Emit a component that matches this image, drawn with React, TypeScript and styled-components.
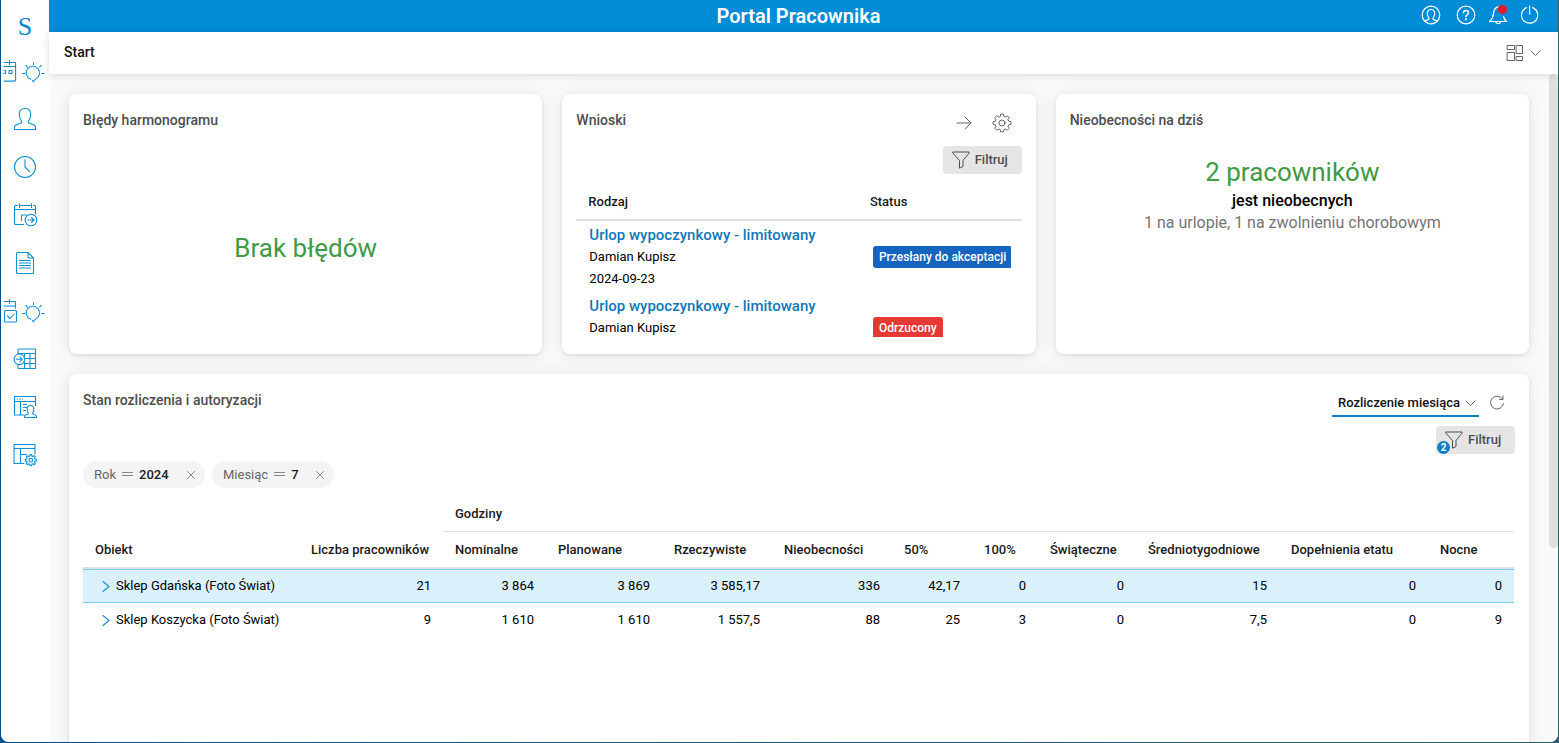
import React from "react";
import styled, { createGlobalStyle, css } from "styled-components";

const GlobalStyle = createGlobalStyle`
  *, *::before, *::after { box-sizing: border-box; }
  body {
    margin: 0;
    font-family: Roboto, "Liberation Sans", sans-serif;
    font-size: 13px;
    line-height: 22px;
    color: #1a1a1a;
  }
  button, select { font: inherit; }
`;

/* ---------- shell ---------- */

const Frame = styled.div`
  height: 100vh;
  padding: 0 1px 1px;
  background: linear-gradient(90deg, #0b4f8a, #2d5d6c);
  overflow: hidden;
`;

const Shell = styled.div`
  height: 100%;
  display: grid;
  grid-template-columns: 48px minmax(0, 1fr);
  background: #fff;
  border-radius: 0 0 8px 8px;
  overflow: hidden;
`;

const Sidebar = styled.nav`
  display: flex;
  flex-direction: column;
  background: #fff;
`;

const Logo = styled.a`
  height: 47px;
  padding-top: 6px;
  display: flex;
  align-items: center;
  justify-content: center;
  font-family: "Liberation Serif", serif;
  font-size: 26px;
  color: #0288d1;
  text-decoration: none;
`;

const NavLink = styled.a`
  height: 48px;
  display: flex;
  align-items: center;
  justify-content: center;
  color: #118fd4;
`;

const Column = styled.div`
  display: flex;
  flex-direction: column;
  min-width: 0;
  min-height: 0;
`;

const TopBar = styled.header`
  flex: none;
  height: 32px;
  display: grid;
  grid-template-columns: 1fr auto 1fr;
  align-items: center;
  padding: 0 18px 0 8px;
  background: #008cd6;
  color: #fff;
`;

const AppTitle = styled.h1`
  margin: 0;
  grid-column: 2;
  font-size: 20px;
  line-height: 28px;
  font-weight: 600;
`;

const TopActions = styled.div`
  display: flex;
  justify-content: flex-end;
  gap: 12px;
  padding-bottom: 2px;
`;

const iconButton = css`
  display: inline-flex;
  align-items: center;
  justify-content: center;
  padding: 0;
  border: 0;
  background: none;
  color: inherit;
  cursor: pointer;
`;

const IconButton = styled.button`
  ${iconButton}
`;

const SubBar = styled.div`
  flex: none;
  height: 42px;
  display: flex;
  align-items: center;
  justify-content: space-between;
  padding: 0 17px 0 15px;
  background: #fff;
  box-shadow: 0 1px 8px rgba(0, 0, 0, 0.14);
  z-index: 1;
`;

const PageTitle = styled.h2`
  margin: 0;
  padding-bottom: 2px;
  font-size: 14px;
  line-height: 22px;
  font-weight: 500;
  color: #111;
`;

const LayoutButton = styled.button`
  ${iconButton}
  gap: 6px;
  color: #666;
`;

const Body = styled.div`
  flex: 1;
  min-height: 0;
  display: flex;
  background: #fafafa;
`;

const Main = styled.main`
  flex: 1;
  min-width: 0;
  overflow: hidden;
  padding: 20px 20px 0;
  display: grid;
  grid-template-columns: repeat(3, minmax(0, 1fr));
  grid-template-rows: 260px 600px;
  gap: 20px;
`;

const ScrollTrack = styled.div`
  flex: none;
  width: 9px;
`;

const ScrollThumb = styled.div`
  height: 71%;
  border-radius: 5px;
  background: #e0e0e0;
`;

/* ---------- cards ---------- */

const Card = styled.section<{ $wide?: boolean }>`
  display: flex;
  flex-direction: column;
  min-width: 0;
  padding: 15px 14px 17px;
  background: #fff;
  border-radius: 8px;
  box-shadow: 0 2px 4px rgba(0, 0, 0, 0.08), 0 0 20px rgba(0, 0, 0, 0.08);
  ${(p) => p.$wide && "grid-column: 1 / -1;"}
`;

const CardHead = styled.div`
  display: flex;
  justify-content: space-between;
  height: 28px;
`;

const CardTitle = styled.h3`
  margin: 0;
  font-size: 14px;
  line-height: 22px;
  font-weight: 500;
  color: #4d4d4d;
`;

const CardTools = styled.div<{ $gap: number }>`
  display: flex;
  align-items: center;
  gap: ${(p) => p.$gap}px;
  padding-right: 10px;
  color: #666;
`;

const Centered = styled.div`
  flex: 1;
  display: flex;
  flex-direction: column;
  align-items: center;
  justify-content: center;
  padding-top: 22px;
`;

const Summary = styled.div`
  display: flex;
  flex-direction: column;
  align-items: center;
  padding-top: 17px;
  font-size: 16px;
`;

const BigText = styled.strong`
  font-size: 26px;
  line-height: 36px;
  font-weight: 400;
  color: #419a46;
`;

const SummaryLead = styled.span`
  font-weight: 500;
  color: #000;
`;

const SummaryNote = styled.span`
  color: #757575;
`;

const FilterRow = styled.div`
  display: flex;
  justify-content: flex-end;
  margin-top: 9px;
`;

const FilterButton = styled.button`
  position: relative;
  display: flex;
  align-items: center;
  gap: 5px;
  width: 79px;
  height: 28px;
  padding: 0 0 0 9px;
  border: 0;
  border-radius: 4px;
  background: #e5e5e5;
  color: #4d4d4d;
  font-weight: 500;
  cursor: pointer;
`;

const Count = styled.span`
  position: absolute;
  left: 1px;
  bottom: 0;
  width: 13px;
  height: 13px;
  border-radius: 50%;
  background: #0a7fc2;
  color: #fff;
  font-size: 10px;
  line-height: 13px;
  font-weight: 700;
  text-align: center;
`;

/* ---------- requests ---------- */

const RequestScroll = styled.div`
  flex: 1;
  min-height: 0;
  overflow: hidden;
  padding-top: 10px;
`;

const RequestTable = styled.table`
  width: 100%;
  table-layout: fixed;
  border-collapse: separate;
  border-spacing: 0;

  th {
    height: 37px;
    padding: 0 12px;
    text-align: left;
    font-weight: 500;
    border-bottom: 2px solid #e0e0e0;
  }
  td {
    padding: 3px 0 2px 13px;
    color: #000;
  }
  td:last-child {
    padding-right: 11px;
  }
`;

const RequestLink = styled.a`
  display: block;
  font-size: 15px;
  font-weight: 500;
  color: #1278b8;
  text-decoration: none;
`;

const Line = styled.div`
  height: 22px;
`;

const StatusClip = styled.div`
  display: flex;
  padding-left: 2px;
  overflow: hidden;
`;

const Status = styled.span<{ $color: string }>`
  flex: none;
  padding: 0 6px;
  border-radius: 3px;
  background: ${(p) => p.$color};
  color: #fff;
  font-size: 12px;
  font-weight: 500;
  white-space: nowrap;
`;

/* ---------- settlement ---------- */

const SelectWrap = styled.label`
  position: relative;
  display: block;
`;

const ViewSelect = styled.select`
  appearance: none;
  width: 147px;
  height: 28px;
  padding: 2px 16px 0 6px;
  border: 0;
  border-bottom: 2px solid #0a7fc2;
  border-radius: 0;
  background: transparent;
  font-weight: 500;
  color: #111;
`;

const SelectArrow = styled.span`
  position: absolute;
  right: 3px;
  top: 11px;
  display: flex;
  pointer-events: none;
`;

const Chips = styled.ul`
  display: flex;
  gap: 7px;
  margin: 7px 0 8px;
  padding: 0;
  list-style: none;
`;

const Chip = styled.li`
  display: flex;
  align-items: center;
  gap: 6px;
  width: 122px;
  height: 27px;
  padding: 0 10px 0 11px;
  border-radius: 14px;
  background: #f4f4f4;
  color: #666;

  svg {
    color: #888;
  }
  b {
    flex: 1;
    font-weight: 500;
    color: #222;
  }
`;

const TableBox = styled.div`
  padding-right: 1px;
`;

const HoursTable = styled.table`
  width: 100%;
  table-layout: fixed;
  border-collapse: separate;
  border-spacing: 0;

  th {
    height: 36px;
    padding: 0 12px;
    text-align: left;
    font-weight: 500;
    white-space: nowrap;
  }
  thead tr:first-child th:last-child {
    border-bottom: 1px solid #e0e0e0;
  }
  thead tr:last-child th {
    height: 37px;
    border-bottom: 2px solid #e0e0e0;
  }
  td {
    height: 34px;
    padding: 0 12px;
    text-align: right;
    color: #000;
    white-space: nowrap;
  }
  td:first-child {
    padding-left: 19px;
    text-align: left;
  }
`;

const HoursRow = styled.tr<{ $active?: boolean }>`
  ${(p) =>
    p.$active &&
    css`
      td {
        background: #daf1fb;
        border-top: 1px solid #74ccee;
        border-bottom: 1px solid #74ccee;
      }
    `}
`;

const ObjectCell = styled.div`
  display: flex;
  align-items: center;
  gap: 6px;
`;

const ExpandButton = styled(IconButton)`
  color: #1e88d0;
`;

/* ---------- icons ---------- */

type SvgProps = { w: number; h: number; sw?: number; children: React.ReactNode };

const Svg = ({ w, h, sw = 1.1, children }: SvgProps) => (
  <svg
    width={w}
    height={h}
    viewBox={`0 0 ${w} ${h}`}
    fill="none"
    stroke="currentColor"
    strokeWidth={sw}
    strokeLinecap="round"
    strokeLinejoin="round"
    aria-hidden="true"
  >
    {children}
  </svg>
);

const Bulb = () => (
  <g>
    <path d="M29.600 21.200A6.700 6.700 0 1 1 34.600 21L32.200 23.600L31.400 22.600" />
    <path d="M32.500 4.500v2M24.800 7.400l1.600 1.600M40.200 7.400l-1.600 1.600M21.500 15.500h2.500M40.500 15.500h2.500" />
  </g>
);

const CalendarTip = () => (
  <Svg w={48} h={26}>
    <path d="M3 4.500h3.500M10.500 4.500h3.500a.6.600 0 0 1 .6.600V22.500a.6.600 0 0 1-.6.600H3M8.500 2.500v4M6.500 4.500h4M3 8.500h11.500" />
    <path d="M3 12.500h1.500v3H3M8 12.500h3v3H8z" />
    <Bulb />
  </Svg>
);

const CheckTip = () => (
  <Svg w={48} h={26}>
    <path d="M3 3.500h3.500M10.500 3.500h4v6.500M8.500 1.500v4M6.500 3.500h4M3 8h11.500" />
    <rect x="3.500" y="12.500" width="12" height="11.500" rx="1" />
    <path d="M6.500 18l2.500 2.500L13 16" />
    <Bulb />
  </Svg>
);

const Person = () => (
  <Svg w={24} h={24}>
    <path d="M1.500 22.500v-2.300c0-1.500 1-2.200 2.500-2.700l4-1.400c.8-.3 1-1 .6-1.700C7.300 12.600 6.300 10.500 6.300 7.300 6.300 3.500 8.500 1.500 12 1.500s5.700 2 5.700 5.800c0 3.200-1 5.300-2.300 7.100-.4.700-.2 1.400.6 1.700l4 1.400c1.500.5 2.500 1.200 2.500 2.700v2.300z" />
  </Svg>
);

const Clock = () => (
  <Svg w={24} h={24}>
    <circle cx="12" cy="12" r="10.500" />
    <path d="M12 4.500V12l4.500 4.500" />
  </Svg>
);

const CalendarGo = () => (
  <Svg w={26} h={24}>
    <path d="M5.500 2.500h-2a1 1 0 0 0-1 1v17a1 1 0 0 0 1 1h8M8.500 2.500h10M21.500 2.500h1a1 1 0 0 1 1 1V11M2.500 6.500h21M7.500.8v3.600M19.500.8v3.600M9.500 17.500v-5.500h5" />
    <circle cx="19" cy="17" r="5.800" />
    <path d="M16 17h6M19.500 14.500L22 17l-2.500 2.500" />
  </Svg>
);

const Doc = () => (
  <Svg w={24} h={24}>
    <path d="M15 1.500H4.500a1 1 0 0 0-1 1v19a1 1 0 0 0 1 1h15a1 1 0 0 0 1-1V7zM15 1.500V6a1 1 0 0 0 1 1h4.500M6.500 9.500h11M6.500 12h11M6.500 14.500h11M6.500 17h11" />
  </Svg>
);

const TableGo = () => (
  <Svg w={24} h={24}>
    <path d="M5 7V3a1 1 0 0 1 1-1h16.500v19.500H6a1 1 0 0 1-1-1v-3M5 6.500h17.500M11.500 11.500h11M11.500 16.500h11M11.500 6.500v3M11.500 15v6.500M17 6.500v15" />
    <circle cx="6.300" cy="12.300" r="5.300" />
    <path d="M3.500 12.300h5.600M7 10l2.200 2.300L7 14.600" />
  </Svg>
);

const WindowPerson = () => (
  <Svg w={24} h={24}>
    <path d="M11 20H1.500V1.500h21v9M1.500 6.500h21M4 4h.5M6.500 4h.5M9 4h.5M7.500 6.500V20M10.500 9.500h3M10.500 12.500h3M10.500 15.500h2" />
    <path d="M11.500 22.500v-1c0-1.200.8-1.600 3.300-2.400.8-.3.600-1 .2-1.700-.600-1-.900-2-.9-3.400 0-2.200 1.300-3.500 3.400-3.500s3.400 1.300 3.400 3.500c0 1.400-.3 2.400-.9 3.400-.4.700-.6 1.400.2 1.700 2.500.8 3.300 1.200 3.300 2.400v1z" />
  </Svg>
);

const gearPath = (cx: number, cy: number, teeth: number, ri: number, ro: number) => {
  const pts: string[] = [];
  const step = (Math.PI * 2) / teeth;
  for (let i = 0; i < teeth; i++) {
    const a = i * step - Math.PI / 2;
    [
      [-0.32, ri],
      [-0.2, ro],
      [0.2, ro],
      [0.32, ri],
    ].forEach(([k, r]) => {
      const t = a + k * step;
      pts.push(`${(cx + r * Math.cos(t)).toFixed(2)} ${(cy + r * Math.sin(t)).toFixed(2)}`);
    });
  }
  return `M${pts.join("L")}Z`;
};

const WindowGear = () => (
  <Svg w={24} h={24}>
    <path d="M11 20.500H1V1.500h21v9.500M1 5.500h21M7.500 5.500v15M7.500 11.500h6" />
    <path d={gearPath(17.8, 17.2, 8, 4.2, 5.6)} />
    <circle cx="17.800" cy="17.200" r="1.800" />
  </Svg>
);

const UserCircle = () => (
  <Svg w={23} h={20} sw={1.2}>
    <circle cx="10" cy="10" r="8.800" />
    <path d="M4 16.200c1-.9 2.400-1.200 3.500-1.700.7-.3.700-.9.300-1.600-.8-1.100-1.500-2.400-1.500-4.400C6.300 6 7.800 4.500 10 4.500S13.700 6 13.700 8.500c0 2-.7 3.300-1.500 4.400-.4.700-.4 1.300.3 1.600 1.100.5 2.500.8 3.500 1.700" />
  </Svg>
);

const Help = () => (
  <Svg w={20} h={20} sw={1.2}>
    <circle cx="10" cy="10" r="8.800" />
    <path d="M7.500 7.800C7.500 6.300 8.500 5.500 10 5.500s2.500.9 2.500 2.200c0 1.900-2.500 2-2.500 4" strokeWidth="1.500" />
    <circle cx="10" cy="14.300" r=".5" fill="currentColor" />
  </Svg>
);

const Bell = () => (
  <Svg w={20} h={20} sw={1.2}>
    <path d="M10 1.800C7 2.500 5.800 5 5.500 8.500c-.2 3.500-1.300 5.500-3.800 8h17c-1.600-1.300-2.700-2.700-3.200-5M7.800 17c.5 2.200 4.200 2.200 4.700 0" />
    <circle cx="14.500" cy="4.500" r="4.500" fill="#e31b23" stroke="none" />
  </Svg>
);

const Power = () => (
  <Svg w={20} h={20} sw={1.2}>
    <path d="M6.500 2.600a8.100 8.100 0 1 0 6.200 0M9.600 1.200v8" />
  </Svg>
);

const Tiles = () => (
  <Svg w={18} h={18} sw={1}>
    <rect x="1.500" y="1.500" width="7" height="4" />
    <rect x="10.500" y="1.500" width="6" height="8" />
    <rect x="1.500" y="8.500" width="7" height="8" />
    <rect x="10.500" y="12.500" width="6" height="4" />
  </Svg>
);

const ChevronDown = () => (
  <Svg w={11} h={7} sw={1}>
    <path d="M1 1l4.500 4.500L10 1" />
  </Svg>
);

const ChevronRight = () => (
  <Svg w={8} h={12}>
    <path d="M1 1.500l6 5L1 11.500" />
  </Svg>
);

const ArrowRight = () => (
  <Svg w={16} h={16} sw={1}>
    <path d="M1 8h14M9 2l6 6-6 6" />
  </Svg>
);

const Gear = () => (
  <Svg w={20} h={20} sw={1}>
    <path d={gearPath(10, 10, 8, 7, 9)} />
    <circle cx="10" cy="10" r="3" />
  </Svg>
);

const Funnel = () => (
  <Svg w={18} h={18} sw={1}>
    <path d="M1 1h16v1.200L11 9.500v6L7.500 17.200V9.500L1 2.200z" />
  </Svg>
);

const Refresh = () => (
  <Svg w={16} h={16} sw={1}>
    <path d="M13.500 4A6.500 6.500 0 1 0 14.500 8.500M14 1v3.500h-3.500" />
  </Svg>
);

const Equals = () => (
  <Svg w={11} h={8} sw={1}>
    <path d="M0 1.500h11M0 4.500h11" />
  </Svg>
);

const Cross = () => (
  <Svg w={8} h={8} sw={1}>
    <path d="M.5.500l7 7M7.500.500l-7 7" />
  </Svg>
);

/* ---------- data ---------- */

const navItems = [
  { label: "Mój kalendarz", Icon: CalendarTip },
  { label: "Pracownicy", Icon: Person },
  { label: "Czas pracy", Icon: Clock },
  { label: "Harmonogram", Icon: CalendarGo },
  { label: "Dokumenty", Icon: Doc },
  { label: "Akceptacje", Icon: CheckTip },
  { label: "Rozliczenia", Icon: TableGo },
  { label: "Kadry", Icon: WindowPerson },
  { label: "Ustawienia", Icon: WindowGear },
];

const requests = [
  {
    type: "Urlop wypoczynkowy - limitowany",
    person: "Damian Kupisz",
    date: "2024-09-23",
    status: "Przesłany do akceptacji",
    color: "#1565c0",
  },
  {
    type: "Urlop wypoczynkowy - limitowany",
    person: "Damian Kupisz",
    date: "",
    status: "Odrzucony",
    color: "#e53935",
  },
];

const filters = [
  { name: "Rok", value: "2024" },
  { name: "Miesiąc", value: "7" },
];

const columnWidths = [216, 144, 103, 116, 110, 120, 80, 66, 98, 143, 149, 86];
const tableWidth = columnWidths.reduce((a, b) => a + b, 0);

const hourColumns = [
  "Nominalne",
  "Planowane",
  "Rzeczywiste",
  "Nieobecności",
  "50%",
  "100%",
  "Świąteczne",
  "Średniotygodniowe",
  "Dopełnienia etatu",
  "Nocne",
];

const shops = [
  {
    name: "Sklep Gdańska (Foto Świat)",
    active: true,
    values: ["21", "3 864", "3 869", "3 585,17", "336", "42,17", "0", "0", "15", "0", "0"],
  },
  {
    name: "Sklep Koszycka (Foto Świat)",
    active: false,
    values: ["9", "1 610", "1 610", "1 557,5", "88", "25", "3", "0", "7,5", "0", "9"],
  },
];

/* ---------- page ---------- */

export default function App() {
  return (
    <Frame>
      <GlobalStyle />
      <Shell>
        <Sidebar aria-label="Menu">
          <Logo href="#">S</Logo>
          {navItems.map(({ label, Icon }) => (
            <NavLink key={label} href="#" aria-label={label}>
              <Icon />
            </NavLink>
          ))}
        </Sidebar>
        <Column>
          <TopBar>
            <AppTitle>Portal Pracownika</AppTitle>
            <TopActions>
              <IconButton aria-label="Profil"><UserCircle /></IconButton>
              <IconButton aria-label="Pomoc"><Help /></IconButton>
              <IconButton aria-label="Powiadomienia"><Bell /></IconButton>
              <IconButton aria-label="Wyloguj"><Power /></IconButton>
            </TopActions>
          </TopBar>
          <SubBar>
            <PageTitle>Start</PageTitle>
            <LayoutButton aria-label="Układ strony">
              <Tiles />
              <ChevronDown />
            </LayoutButton>
          </SubBar>
          <Body>
            <Main>
              <Card>
                <CardHead><CardTitle>Błędy harmonogramu</CardTitle></CardHead>
                <Centered><BigText>Brak błędów</BigText></Centered>
              </Card>

              <Card>
                <CardHead>
                  <CardTitle>Wnioski</CardTitle>
                  <CardTools $gap={20}>
                    <IconButton aria-label="Przejdź"><ArrowRight /></IconButton>
                    <IconButton aria-label="Ustawienia wniosków"><Gear /></IconButton>
                  </CardTools>
                </CardHead>
                <FilterRow>
                  <FilterButton><Funnel />Filtruj</FilterButton>
                </FilterRow>
                <RequestScroll>
                  <RequestTable>
                    <colgroup>
                      <col />
                      <col style={{ width: `${(164 / 446) * 100}%` }} />
                    </colgroup>
                    <thead>
                      <tr>
                        <th scope="col">Rodzaj</th>
                        <th scope="col">Status</th>
                      </tr>
                    </thead>
                    <tbody>
                      {requests.map((r, i) => (
                        <tr key={i}>
                          <td>
                            <RequestLink href="#">{r.type}</RequestLink>
                            <Line>{r.person}</Line>
                            <Line>{r.date}</Line>
                          </td>
                          <td>
                            <StatusClip>
                              <Status $color={r.color}>{r.status}</Status>
                            </StatusClip>
                          </td>
                        </tr>
                      ))}
                    </tbody>
                  </RequestTable>
                </RequestScroll>
              </Card>

              <Card>
                <CardHead><CardTitle>Nieobecności na dziś</CardTitle></CardHead>
                <Summary>
                  <BigText>2 pracowników</BigText>
                  <SummaryLead>jest nieobecnych</SummaryLead>
                  <SummaryNote>1 na urlopie, 1 na zwolnieniu chorobowym</SummaryNote>
                </Summary>
              </Card>

              <Card $wide>
                <CardHead>
                  <CardTitle>Stan rozliczenia i autoryzacji</CardTitle>
                  <CardTools $gap={10}>
                    <SelectWrap>
                      <ViewSelect aria-label="Widok" defaultValue="month">
                        <option value="month">Rozliczenie miesiąca</option>
                      </ViewSelect>
                      <SelectArrow><ChevronDown /></SelectArrow>
                    </SelectWrap>
                    <IconButton aria-label="Odśwież"><Refresh /></IconButton>
                  </CardTools>
                </CardHead>
                <FilterRow>
                  <FilterButton><Funnel />Filtruj<Count>2</Count></FilterButton>
                </FilterRow>
                <Chips>
                  {filters.map((f) => (
                    <Chip key={f.name}>
                      <span>{f.name}</span>
                      <Equals />
                      <b>{f.value}</b>
                      <IconButton aria-label={`Usuń filtr ${f.name}`}><Cross /></IconButton>
                    </Chip>
                  ))}
                </Chips>
                <TableBox>
                  <HoursTable>
                    <colgroup>
                      {columnWidths.map((w, i) => (
                        <col key={i} style={{ width: `${(w / tableWidth) * 100}%` }} />
                      ))}
                    </colgroup>
                    <thead>
                      <tr>
                        <th colSpan={2} />
                        <th colSpan={10} scope="colgroup">Godziny</th>
                      </tr>
                      <tr>
                        <th scope="col">Obiekt</th>
                        <th scope="col">Liczba pracowników</th>
                        {hourColumns.map((c) => (
                          <th key={c} scope="col">{c}</th>
                        ))}
                      </tr>
                    </thead>
                    <tbody>
                      {shops.map((s) => (
                        <HoursRow key={s.name} $active={s.active}>
                          <td>
                            <ObjectCell>
                              <ExpandButton aria-label={`Rozwiń ${s.name}`}>
                                <ChevronRight />
                              </ExpandButton>
                              {s.name}
                            </ObjectCell>
                          </td>
                          {s.values.map((v, i) => (
                            <td key={i}>{v}</td>
                          ))}
                        </HoursRow>
                      ))}
                    </tbody>
                  </HoursTable>
                </TableBox>
              </Card>
            </Main>
            <ScrollTrack aria-hidden="true"><ScrollThumb /></ScrollTrack>
          </Body>
        </Column>
      </Shell>
    </Frame>
  );
}
